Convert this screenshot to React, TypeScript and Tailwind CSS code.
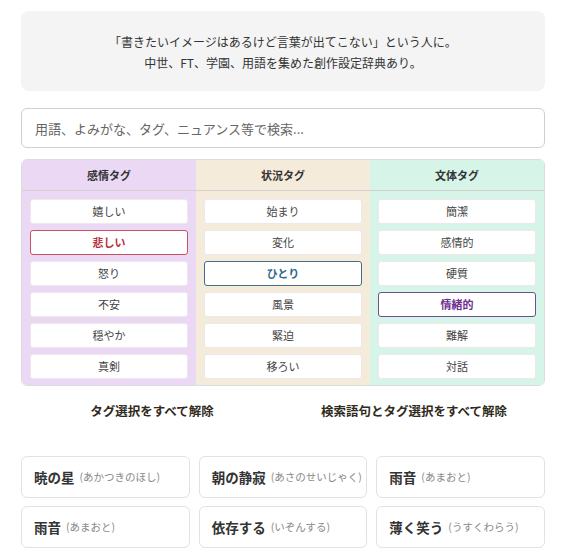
import React from 'react';

const font = { fontFamily: '"Noto Sans CJK JP", "Noto Sans", sans-serif' };

type Tag = { label: string; active?: 'red' | 'blue' | 'purple' };

const columns: { title: string; bg: string; tags: Tag[] }[] = [
  {
    title: '感情タグ',
    bg: 'bg-[#ead8f4]',
    tags: [{ label: '嬉しい' }, { label: '悲しい', active: 'red' }, { label: '怒り' }, { label: '不安' }, { label: '穏やか' }, { label: '真剣' }],
  },
  {
    title: '状況タグ',
    bg: 'bg-[#f5ebdb]',
    tags: [{ label: '始まり' }, { label: '変化' }, { label: 'ひとり', active: 'blue' }, { label: '風景' }, { label: '緊迫' }, { label: '移ろい' }],
  },
  {
    title: '文体タグ',
    bg: 'bg-[#d6f4e8]',
    tags: [{ label: '簡潔' }, { label: '感情的' }, { label: '硬質' }, { label: '情緒的', active: 'purple' }, { label: '難解' }, { label: '対話' }],
  },
];

const activeStyle = {
  red: 'border-[#c9525e] text-[#b8323f] font-bold',
  blue: 'border-[#3f6f8c] text-[#2d6a90] font-bold',
  purple: 'border-[#6d4f92] text-[#6e2f8f] font-bold',
};

const words = [
  { word: '暁の星', yomi: 'あかつきのほし' },
  { word: '朝の静寂', yomi: 'あさのせいじゃく' },
  { word: '雨音', yomi: 'あまおと' },
  { word: '雨音', yomi: 'あまおと' },
  { word: '依存する', yomi: 'いぞんする' },
  { word: '薄く笑う', yomi: 'うすくわらう' },
];

export default function App() {
  return (
    <div className="min-h-screen bg-white px-[21px] pt-[11px]" style={font}>
      <div className="rounded-lg bg-[#f4f4f4] pb-[18px] pt-[20px] text-center text-[12px] leading-[21px] text-[#333]">
        <p>「書きたいイメージはあるけど言葉が出てこない」という人に。</p>
        <p>中世、FT、学園、用語を集めた創作設定辞典あり。</p>
      </div>

      <input
        type="text"
        placeholder="用語、よみがな、タグ、ニュアンス等で検索..."
        className="mt-[17px] block h-[40px] w-full rounded-md border border-[#cfcfcf] px-[13px] text-[13px] text-[#333] placeholder:text-[#666] outline-none"
        style={font}
      />

      <div className="mt-[11px] grid grid-cols-3 overflow-hidden rounded-md border border-[#dcdcdc]">
        {columns.map((col) => (
          <div key={col.title} className={col.bg}>
            <div className="flex h-[31px] items-center justify-center border-b border-[#d4d0d0] text-[11px] font-bold text-[#333]">
              {col.title}
            </div>
            <div className="flex flex-col gap-[6px] px-[8px] pb-[6px] pt-[8px]">
              {col.tags.map((t) => (
                <button
                  key={t.label}
                  className={`h-[25px] rounded-[3px] border bg-white text-[11px] ${
                    t.active ? activeStyle[t.active] : 'border-[#ece8ec] text-[#444]'
                  }`}
                  style={font}
                >
                  {t.label}
                </button>
              ))}
            </div>
          </div>
        ))}
      </div>

      <div className="mt-[10px] grid grid-cols-2">
        <button className="h-[30px] text-[12.5px] font-bold text-[#2f2a1c]" style={font}>
          タグ選択をすべて解除
        </button>
        <button className="h-[30px] text-[12.5px] font-bold text-[#2f2a1c]" style={font}>
          検索語句とタグ選択をすべて解除
        </button>
      </div>

      <div className="mt-[30px] grid grid-cols-3 gap-x-[9px] gap-y-[8px]">
        {words.map((w, i) => (
          <div
            key={i}
            className="flex h-[42px] items-center overflow-hidden whitespace-nowrap rounded-md border border-[#e2e2e2] bg-white px-[12px]"
          >
            <span className="text-[13.5px] font-bold text-[#333]">{w.word}</span>
            <span className="ml-[5px] text-[10.5px] text-[#888]">({w.yomi})</span>
          </div>
        ))}
      </div>
    </div>
  );
}
